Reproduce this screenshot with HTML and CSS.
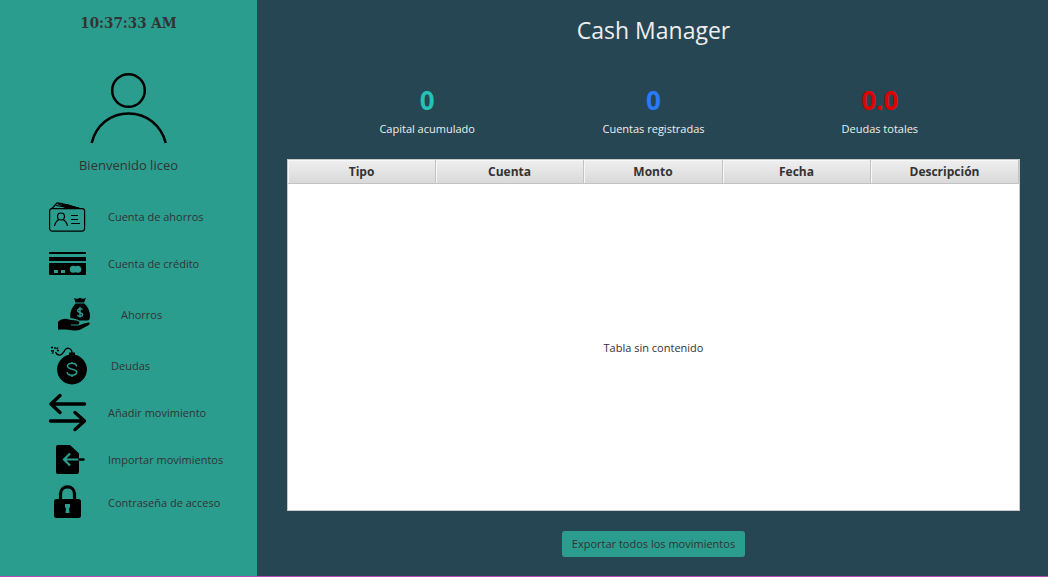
FILE: index.html
```html
<!DOCTYPE html>
<html lang="es">
<head>
<meta charset="utf-8">
<meta name="viewport" content="width=device-width, initial-scale=1">
<title>Cash Manager</title>
<link rel="stylesheet" href="styles.css">
</head>
<body>
<div class="app">
  <aside class="sidebar">
    <time class="clock">10:37:33 AM</time>
    <svg class="avatar" viewBox="0 0 78 72" aria-hidden="true">
      <circle cx="38.500" cy="18.500" r="16.300" fill="none" stroke="#000" stroke-width="2.500"/>
      <path d="M1.700 71C6 53 20.500 41.500 38.500 41.500S71 53 75.800 71" fill="none" stroke="#000" stroke-width="2.500"/>
    </svg>
    <p class="welcome">Bienvenido liceo</p>
    <nav class="menu">
      <button class="menu-item" type="button">
        <svg class="icon" viewBox="0 0 40 40" aria-hidden="true">
          <g fill="none" stroke="#000" stroke-width="1.200">
            <rect x="1.600" y="11.600" width="35" height="22.500" rx="2.500"/>
            <path d="M4 11.500l5-5.500 5 .5 18 5M8 8.500l18 3M10 7l10 3"/>
            <path d="M14 7.500l10 2.500 8 1.500"/>
            <circle cx="13" cy="19.500" r="3.500"/>
            <path d="M6.500 29c.5-3 2-5 4.500-6.500M15 22.500c2.500 1.500 4 3.500 4.500 6.500M23 18.500h7M23 22.500h7M23 26.500h9"/>
          </g>
          <path d="M12 8l7-1 14 4.500H18z"/>
        </svg>
        <span>Cuenta de ahorros</span>
      </button>
      <button class="menu-item" type="button">
        <svg class="icon" viewBox="0 0 40 40" aria-hidden="true">
          <path d="M2 8h35q1 0 1 1v1H1V9q0-1 1-1zM1 13h37v4H1zM1 19h37v11q0 1-1 1H2q-1 0-1-1z"/>
          <path fill="#2a9d8f" d="M6 26h4v3H6zM13 26h4v3h-4z"/>
          <circle cx="25.300" cy="25.300" r="3.500" fill="#2a9d8f"/>
          <circle cx="29.800" cy="25.300" r="3.500" fill="#2a9d8f"/>
        </svg>
        <span>Cuenta de crédito</span>
      </button>
      <button class="menu-item" type="button">
        <svg class="icon icon-savings" viewBox="0 0 53 48" aria-hidden="true">
          <path d="M26 7q3 1.500 6-.300 3 1.800 6 .300l-2 4.500h-8.500zM27.500 12.500h9c4 4 5.500 8.500 5.500 12.500 0 3-1 4.500-3 4.500H31c-2-1.500-5-2-8.500-2.500-1-5 1-10 5-14.500z"/>
          <path d="M10 31c3-3 7-4 11-2.500 3 1 7 .5 9 1.500 2.500 1.500 1.500 3.500-1 3.500h-6v1h7c3.500-1 7-2.500 11-3 1.500.5.5 2-1 3l-8 4.300c-3 1.500-8 .5-12 0-4-.500-7-.300-10 0z"/>
          <path fill="none" stroke="#2a9d8f" stroke-width="1.400" d="M34.500 18.500c-1.500-1.500-5-1-5 1.200s5.200 1.600 5.200 3.800c0 2-3.700 2.300-5.400.7M32 16v10.500"/>
        </svg>
        <span>Ahorros</span>
      </button>
      <button class="menu-item" type="button">
        <svg class="icon icon-debts" viewBox="0 0 43 40" aria-hidden="true">
          <circle cx="24" cy="23.500" r="14.900"/>
          <path d="M21 6.500h6v4h-6z"/>
          <path fill="none" stroke="#000" stroke-width="1.300" d="M24 7c0-5-5-6-7-3-2 3-3 5.500-6 5-2-.300-3-1.500-3.500-3"/>
          <path fill="none" stroke="#000" stroke-width="1.400" d="M3 1.500h2M7 1v2M10 1.500l-1.500 1.500M3 5h3M4 7.500l1.500-1M9 4.500h2"/>
          <path fill="none" stroke="#2a9d8f" stroke-width="1.500" d="M28.500 20.500c0-4.300-9-4.300-9-.5 0 4 9.300 2.500 9.300 6.300 0 4-9.600 3.700-9.600 0M24 16v2M24 29v2"/>
        </svg>
        <span>Deudas</span>
      </button>
      <button class="menu-item" type="button">
        <svg class="icon" viewBox="0 0 40 40" aria-hidden="true">
          <path fill="none" stroke="#000" stroke-width="3.400" stroke-linecap="round" stroke-linejoin="round" d="M36.500 11H3M12 2.500L3 11l9 8.500M2.500 28h33.500M27 19.500l9.500 8.500-9.500 8.500"/>
        </svg>
        <span>Añadir movimiento</span>
      </button>
      <button class="menu-item" type="button">
        <svg class="icon" viewBox="0 0 40 40" aria-hidden="true">
          <path d="M10 5h12l9 8.500V32q0 2-2 2H10q-2 0-2-2V7q0-2 2-2z"/>
          <path fill="none" stroke="#2a9d8f" stroke-width="2.200" d="M31 19.500H17M22 13.500l-6 6 6 6"/>
          <path fill="none" stroke="#000" stroke-width="2.400" stroke-linecap="round" d="M31.500 19.500h4"/>
        </svg>
        <span>Importar movimientos</span>
      </button>
      <button class="menu-item" type="button">
        <svg class="icon icon-lock" viewBox="0 0 40 34" aria-hidden="true">
          <rect x="6" y="14" width="27" height="19" rx="2.500"/>
          <path fill="none" stroke="#000" stroke-width="3.200" d="M12.500 15V9c0-9.500 14-9.500 14 0v6"/>
          <path fill="#2a9d8f" d="M17 19h5v3l-1 1.500.5 4.500h-4l.5-4.500-1-1.500z"/>
        </svg>
        <span>Contraseña de acceso</span>
      </button>
    </nav>
  </aside>
  <main class="content">
    <h1 class="title">Cash Manager</h1>
    <section class="stats">
      <div class="stat"><strong class="value value-capital">0</strong><span>Capital acumulado</span></div>
      <div class="stat"><strong class="value value-accounts">0</strong><span>Cuentas registradas</span></div>
      <div class="stat"><strong class="value value-debts">0.0</strong><span>Deudas totales</span></div>
    </section>
    <table class="movements">
      <colgroup><col class="col"><col class="col"><col class="col-amount"><col class="col"><col class="col"></colgroup>
      <thead>
        <tr><th scope="col">Tipo</th><th scope="col">Cuenta</th><th scope="col">Monto</th><th scope="col">Fecha</th><th scope="col">Descripción</th></tr>
      </thead>
      <tbody>
        <tr><td class="empty" colspan="5">Tabla sin contenido</td></tr>
      </tbody>
    </table>
    <button class="export" type="button">Exportar todos los movimientos</button>
  </main>
</div>
</body>
</html>
```
FILE: styles.css
```css
* {
  box-sizing: border-box;
}

body {
  margin: 0;
  font: 11px/16px "Open Sans", "Noto Sans", sans-serif;
  color: #333;
}

button {
  font: inherit;
  color: inherit;
  border: 0;
  cursor: pointer;
}

.app {
  display: flex;
  min-height: 100vh;
  border-bottom: 1px solid #b74fb5;
  background: #264653;
}

.sidebar {
  flex: 0 0 257px;
  display: flex;
  flex-direction: column;
  align-items: center;
  padding-top: 13px;
  background: #2a9d8f;
}

.clock {
  font: bold 15px/20px "DejaVu Serif Condensed", "DejaVu Serif", serif;
}

.avatar {
  width: 78px;
  height: 72px;
  margin-top: 39px;
}

.welcome {
  margin: 11px 0 0;
  font-size: 13px;
  line-height: 20px;
}

.menu {
  align-self: stretch;
  display: flex;
  flex-direction: column;
  gap: 7px;
  margin-top: 22px;
  padding-left: 48px;
}

.menu-item {
  display: flex;
  align-items: center;
  gap: 20px;
  padding: 0;
  background: none;
  text-align: left;
  white-space: nowrap;
}

.icon {
  flex: none;
  width: 40px;
  height: 40px;
}

.icon-savings {
  width: 53px;
  height: 48px;
}

.icon-debts {
  width: 43px;
}

.icon-lock {
  height: 34px;
  margin-top: -2px;
}

.content {
  flex: 1;
  min-width: 0;
  display: flex;
  flex-direction: column;
  padding: 14px 28px 19px 30px;
}

.title {
  margin: 0;
  font-size: 23px;
  font-weight: 400;
  line-height: 32px;
  text-align: center;
  color: #eee;
}

.stats {
  display: grid;
  grid-template-columns: repeat(3, 1fr);
  margin: 38px 27px 22px;
  color: #eee;
}

.stat {
  display: flex;
  flex-direction: column;
  align-items: center;
  gap: 5px;
}

.value {
  font-size: 26px;
  line-height: 32px;
}

.value-capital {
  color: #24c1b5;
}

.value-accounts {
  color: #2979ff;
}

.value-debts {
  color: #e00000;
}

.movements {
  flex: 1;
  width: 100%;
  table-layout: fixed;
  border-collapse: separate;
  border-spacing: 0;
  border: 1px solid #c8c8c8;
  background: #fff;
}

.col-amount {
  width: 19%;
}

.movements th {
  height: 24px;
  padding: 1px 0 0;
  border-right: 1px solid #c3c3c3;
  border-bottom: 1px solid #c3c3c3;
  background: linear-gradient(#efefef, #d9d9d9);
  box-shadow: inset 1px 1px #f7f7f7;
  font-size: 12px;
  font-weight: 700;
}

.empty {
  padding: 1px 0 0;
  text-align: center;
}

.export {
  align-self: center;
  margin-top: 20px;
  padding: 5px 10px;
  border-radius: 3px;
  background: #2a9d8f;
}
```
